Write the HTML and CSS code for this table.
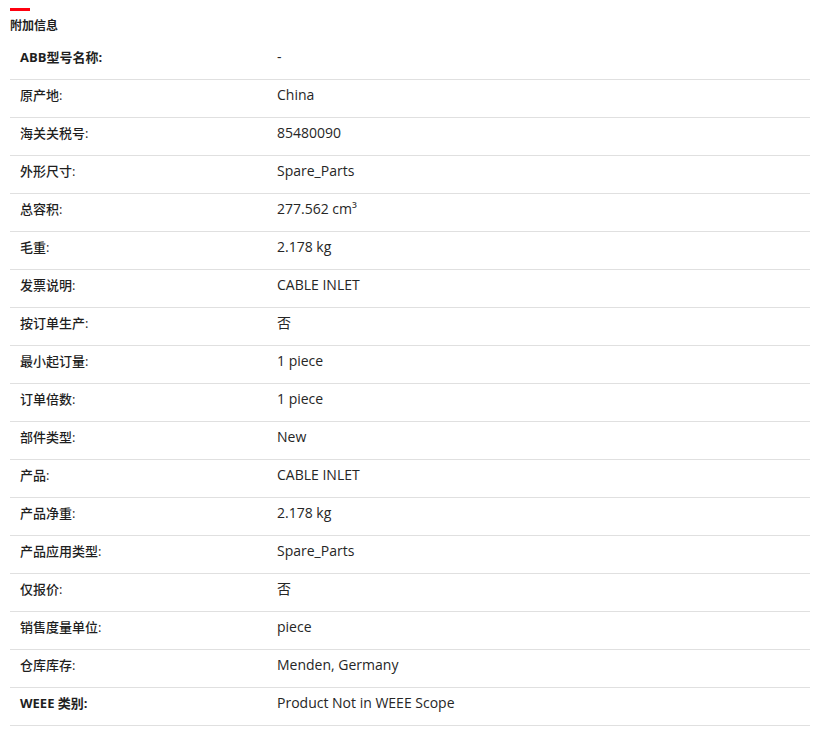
FILE: index.html
```html
<!DOCTYPE html>
<html lang="zh">
<head>
<meta charset="utf-8">
<link rel="stylesheet" href="styles.css">
</head>
<body>
<section class="panel">
  <div class="accent"></div>
  <h2 class="title">附加信息</h2>
  <div class="table">
    <div class="row"><div class="label strong">ABB型号名称:</div><div class="value">-</div></div>
    <div class="row"><div class="label">原产地:</div><div class="value">China</div></div>
    <div class="row"><div class="label">海关关税号:</div><div class="value">85480090</div></div>
    <div class="row"><div class="label">外形尺寸:</div><div class="value">Spare_Parts</div></div>
    <div class="row"><div class="label">总容积:</div><div class="value">277.562 cm³</div></div>
    <div class="row"><div class="label">毛重:</div><div class="value">2.178 kg</div></div>
    <div class="row"><div class="label">发票说明:</div><div class="value">CABLE INLET</div></div>
    <div class="row"><div class="label">按订单生产:</div><div class="value">否</div></div>
    <div class="row"><div class="label">最小起订量:</div><div class="value">1 piece</div></div>
    <div class="row"><div class="label">订单倍数:</div><div class="value">1 piece</div></div>
    <div class="row"><div class="label">部件类型:</div><div class="value">New</div></div>
    <div class="row"><div class="label">产品:</div><div class="value">CABLE INLET</div></div>
    <div class="row"><div class="label">产品净重:</div><div class="value">2.178 kg</div></div>
    <div class="row"><div class="label">产品应用类型:</div><div class="value">Spare_Parts</div></div>
    <div class="row"><div class="label">仅报价:</div><div class="value">否</div></div>
    <div class="row"><div class="label">销售度量单位:</div><div class="value">piece</div></div>
    <div class="row"><div class="label">仓库库存:</div><div class="value">Menden, Germany</div></div>
    <div class="row"><div class="label strong">WEEE 类别:</div><div class="value">Product Not in WEEE Scope</div></div>
  </div>
</section>
</body>
</html>
```
FILE: styles.css
```css
html, body {
  margin: 0;
  padding: 0;
  background: #ffffff;
}
body {
  font-family: "Open Sans", "Noto Sans CJK SC", sans-serif;
  color: #1f1f1f;
  font-size: 13px;
}
.panel {
  width: 800px;
  padding: 8px 0 0 10px;
}
.accent {
  width: 20px;
  height: 3px;
  background: #ff000f;
}
.title {
  margin: 0;
  padding-top: 6px;
  font-size: 12px;
  line-height: 18px;
  font-weight: 700;
  color: #1f1f1f;
}
.table {
  margin-top: 7px;
}
.row {
  display: grid;
  grid-template-columns: 257px 1fr;
  padding: 0 10px 7px;
  height: 30px;
  align-items: center;
  border-bottom: 1px solid #e0e0e0;
}
.label {
  font-size: 13px;
  line-height: 18px;
  font-weight: 500;
}
.label.strong {
  font-weight: 700;
}
.value {
  font-size: 14px;
  line-height: 18px;
  font-weight: 400;
  color: #262626;
}
```
